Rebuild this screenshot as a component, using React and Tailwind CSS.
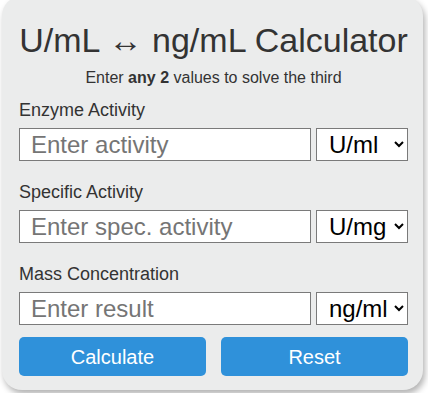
export default function App() {
  const groups = [
    { label: "Enzyme Activity", ph: "Enter activity", opts: ["U/ml", "U/l"] },
    { label: "Specific Activity", ph: "Enter spec. activity", opts: ["U/mg", "U/g"] },
    { label: "Mass Concentration", ph: "Enter result", opts: ["ng/ml", "µg/ml"] },
  ];
  return (
    <div className="min-h-[397px] bg-white font-['Liberation_Sans',Arial,sans-serif] text-[#333]">
      <div className="ml-[2px] mt-[-4px] w-[421px] rounded-[20px] bg-[#ebecec] pl-[17px] pr-[15px] pt-[24px] pb-[14px] shadow-[2px_4px_6px_rgba(0,0,0,0.3)]">
        <h1 className="text-center text-[34px] leading-[40px]">U/mL ↔ ng/mL Calculator</h1>
        <p className="mt-[8px] text-center text-[16px] leading-[20px]">
          Enter <b>any 2</b> values to solve the third
        </p>
        <div className="mt-[10px]">
          {groups.map((g) => (
            <div key={g.label} className="mb-[19px] last:mb-[12px]">
              <div className="text-[18px] leading-[24px]">{g.label}</div>
              <div className="mt-[6px] flex gap-[5px]">
                <input
                  className="h-[33px] w-[292px] border border-[#7a7a7a] bg-white pl-[11px] text-[24px] text-black placeholder:text-[#757575] outline-none"
                  placeholder={g.ph}
                />
                <select className="h-[33px] w-[92px] border border-[#7a7a7a] bg-white pl-[8px] text-[24px] text-black">
                  {g.opts.map((o) => (
                    <option key={o}>{o}</option>
                  ))}
                </select>
              </div>
            </div>
          ))}
        </div>
        <div className="flex gap-[15px]">
          <button className="h-[39px] w-[187px] rounded-[5px] bg-[#2f91da] text-[20px] text-white">Calculate</button>
          <button className="h-[39px] w-[187px] rounded-[5px] bg-[#2f91da] text-[20px] text-white">Reset</button>
        </div>
      </div>
    </div>
  );
}
